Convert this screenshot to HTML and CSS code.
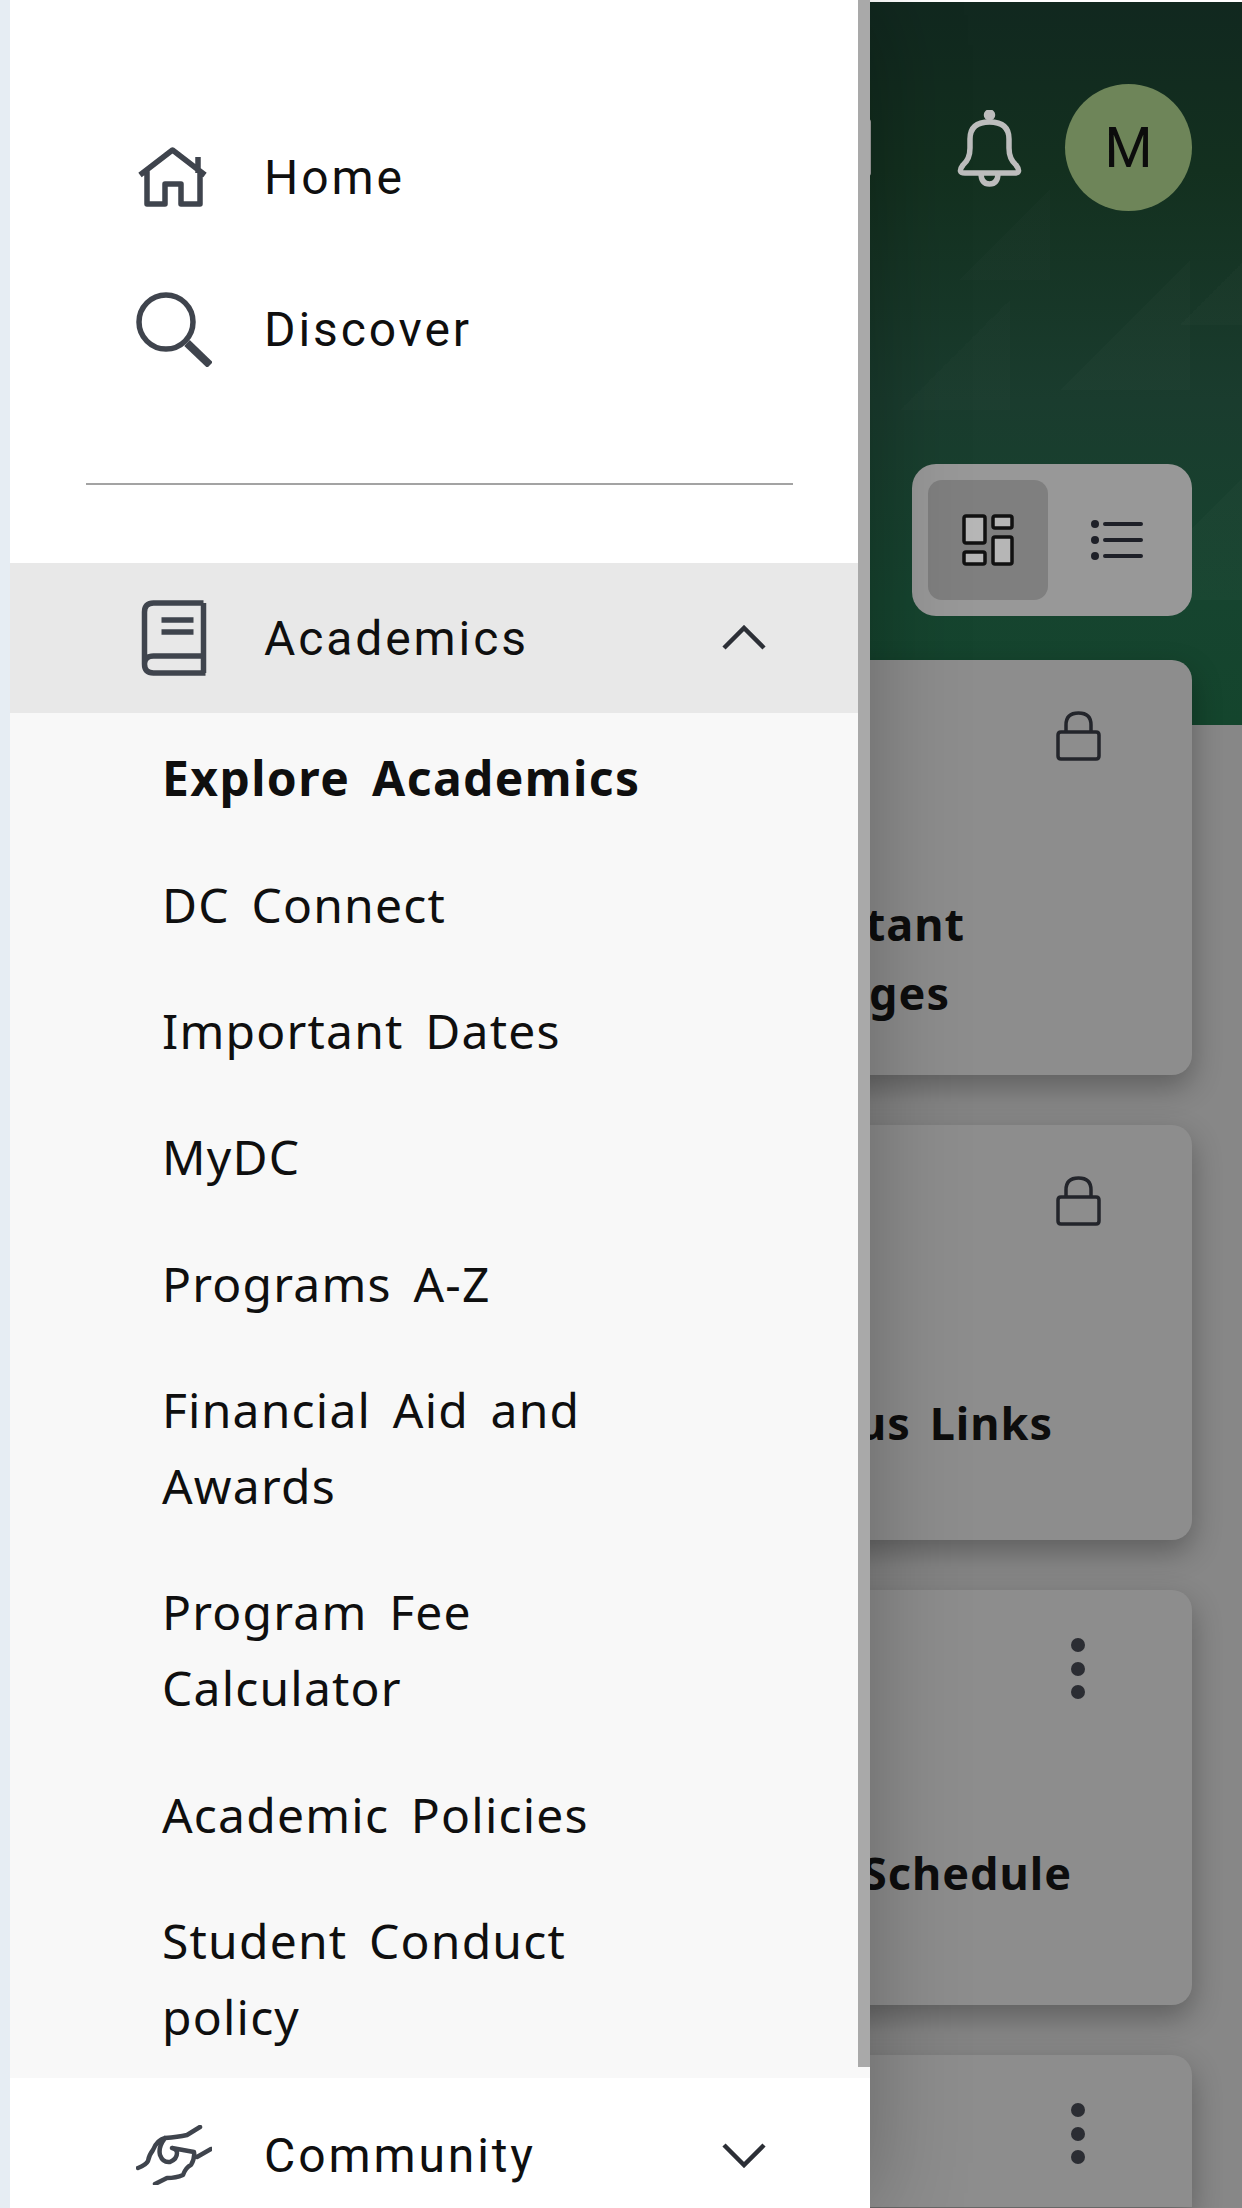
FILE: index.html
```html
<!DOCTYPE html>
<html lang="en">
<head>
<meta charset="utf-8">
<title>Menu</title>
<link rel="stylesheet" href="styles.css">
</head>
<body>
<div class="page">
  <header class="top">
    <span class="peek"></span>
    <svg class="bell" viewBox="0 0 67 79" fill="none"><circle cx="33.500" cy="5" r="3" fill="#bdbdbd"/><path d="M7 55Q14 49 14 38V29Q14 12 33.500 12Q53 12 53 29V38Q53 49 60 55Q66 63 58 63H9Q1 63 7 55ZM25 63Q25 74 33.500 74Q42 74 42 63"/></svg>
    <div class="avatar">M</div>
  </header>
  <div class="toggle-row">
    <div class="toggle">
      <span class="toggle-btn is-on">
        <svg class="i-grid" viewBox="0 0 52 52"><rect x="2" y="2" width="21" height="27" rx="2"/><rect x="31" y="2" width="19" height="12" rx="2"/><rect x="2" y="38" width="21" height="12" rx="2"/><rect x="31" y="23" width="19" height="27" rx="2"/></svg>
      </span>
      <span class="toggle-btn">
        <svg class="i-list" viewBox="0 0 52 42"><circle cx="4" cy="5" r="4"/><circle cx="4" cy="21" r="4"/><circle cx="4" cy="37" r="4"/><path d="M14 5H50M14 21H50M14 37H50"/></svg>
      </span>
    </div>
  </div>
  <main class="cards">
    <article class="card">
      <div class="card-head"><svg class="i-lock" viewBox="0 0 45 50"><path d="M10 21V14Q10 2 22.500 2Q35 2 35 14V21M5 21H40Q43 21 43 24V45Q43 48 40 48H5Q2 48 2 45V24Q2 21 5 21Z"/></svg></div>
      <div class="card-title t-one"><span>Important<br>Messages</span></div>
    </article>
    <article class="card">
      <div class="card-head"><svg class="i-lock" viewBox="0 0 45 50"><path d="M10 21V14Q10 2 22.500 2Q35 2 35 14V21M5 21H40Q43 21 43 24V45Q43 48 40 48H5Q2 48 2 45V24Q2 21 5 21Z"/></svg></div>
      <div class="card-title t-two"><span>Campus Links</span></div>
    </article>
    <article class="card">
      <div class="card-head"><span class="kebab"><i></i><i></i><i></i></span></div>
      <div class="card-title t-three"><span>Class Schedule</span></div>
    </article>
    <article class="card card-cut">
      <div class="card-head"><span class="kebab"><i></i><i></i><i></i></span></div>
    </article>
  </main>
</div>

<nav class="drawer">
  <div class="drawer-body">
    <div class="drawer-scroll">
      <div class="quick">
        <a class="row"><span class="ico"><svg class="i-home" viewBox="0 0 70 60"><path d="M2 28L34.500 3L67 28M9 23V57H27V37H43V57H62V23M60 10V26"/></svg></span><span class="label">Home</span></a>
        <a class="row"><span class="ico"><svg class="i-search" viewBox="0 0 76 76"><circle cx="30" cy="31" r="27"/><path class="thick" d="M51 52L74 74"/></svg></span><span class="label">Discover</span></a>
      </div>
      <hr class="rule">
      <a class="row row-open"><span class="ico"><svg class="i-book" viewBox="0 0 66 76"><path d="M62 3H12Q3 3 3 12V64Q3 73 12 73H64M62 3V56H12Q3 56 3 64M62 56V73M20 20H52M20 32H52"/></svg></span><span class="label">Academics</span><svg class="chev" viewBox="0 0 46 26"><path d="M3 23L23 3L43 23"/></svg></a>
      <ul class="sub">
        <li class="sub-strong">Explore Academics</li>
        <li>DC Connect</li>
        <li>Important Dates</li>
        <li>MyDC</li>
        <li>Programs A-Z</li>
        <li>Financial Aid and<br>Awards</li>
        <li>Program Fee<br>Calculator</li>
        <li>Academic Policies</li>
        <li>Student Conduct<br>policy</li>
      </ul>
    </div>
    <div class="track"><span class="thumb"></span></div>
  </div>
  <a class="row row-foot"><span class="ico"><svg class="i-hands" viewBox="0 0 76 60"><path d="M2 43Q10 40 12 36Q13 30 17 25Q21 15 29 13Q42 12 51 10L64 2M29 13Q22 22 24 30Q27 38 34 37Q41 34 41 28Q41 24 36 23L58 27Q59 33 55 40Q50 42 47 50Q40 53 31 53L19 59M61 32L75 24"/></svg></span><span class="label">Community</span><svg class="chev" viewBox="0 0 46 26"><path d="M3 3L23 23L43 3"/></svg></a>
</nav>
</body>
</html>
```
FILE: styles.css
```css
* { box-sizing: border-box; }
html, body { margin: 0; padding: 0; }
body {
  position: relative;
  width: 1242px;
  height: 2208px;
  overflow: hidden;
  font-family: "Noto Sans", sans-serif;
  background: #878787;
}
.page {
  height: 2208px;
  padding-top: 2px;
  background:
    linear-gradient(135deg, transparent 50%, rgba(255,255,255,.014) 50%) 1060px 260px / 130px 130px no-repeat,
    linear-gradient(135deg, transparent 50%, rgba(255,255,255,.014) 50%) 1180px 255px / 70px 70px no-repeat,
    linear-gradient(135deg, transparent 50%, rgba(255,255,255,.016) 50%) 1120px 470px / 130px 130px no-repeat,
    linear-gradient(135deg, transparent 50%, rgba(255,255,255,.012) 50%) 900px 300px / 110px 110px no-repeat,
    linear-gradient(135deg, transparent 50%, rgba(255,255,255,.012) 50%) 960px 190px / 90px 90px no-repeat,
    linear-gradient(180deg, #fff 0, #fff 2px, #11281f 2px, #13301f 170px, #1a3c2e 400px, #16442f 600px, #14452d 725px, #878787 725px);
}
.top {
  display: flex;
  align-items: center;
  justify-content: flex-end;
  height: 127px;
  margin-top: 82px;
  padding-right: 50px;
}
.peek {
  width: 3px;
  height: 57px;
  margin-right: 85px;
  background: #a4a4a4;
  border-radius: 0 4px 4px 0;
}
.bell {
  width: 67px;
  height: 79px;
  margin: 3px 42px 0 0;
  fill: none;
  stroke: #bdbdbd;
  stroke-width: 5.500;
  stroke-linejoin: round;
  stroke-linecap: round;
}
.avatar {
  width: 127px;
  height: 127px;
  display: flex;
  align-items: center;
  justify-content: center;
  border-radius: 50%;
  background: #6e8559;
  color: #0c0c0c;
  font-family: Roboto, sans-serif;
  font-size: 55px;
}
.toggle-row {
  display: flex;
  justify-content: flex-end;
  margin-top: 253px;
  padding-right: 50px;
}
.toggle {
  display: flex;
  align-items: center;
  width: 280px;
  height: 152px;
  padding: 16px;
  border-radius: 24px;
  background: #989898;
}
.toggle-btn {
  flex: 0 0 120px;
  height: 120px;
  display: flex;
  align-items: center;
  justify-content: center;
  border-radius: 14px;
}
.toggle-btn + .toggle-btn { margin-left: 9px; }
.is-on { background: #7f7f7f; }
.i-grid { width: 52px; height: 52px; }
.i-grid rect { fill: #b6b6b6; stroke: #111; stroke-width: 3.500; }
.i-list { width: 52px; height: 42px; }
.i-list circle { fill: #1e2028; }
.i-list path { stroke: #1e2028; stroke-width: 4; stroke-linecap: round; fill: none; }
.cards {
  display: flex;
  flex-direction: column;
  gap: 50px;
  margin: 44px 50px 0 50px;
}
.card {
  flex: none;
  height: 415px;
  border-radius: 20px;
  background: #8d8d8d;
  box-shadow: 0 12px 30px rgba(0,0,0,.3);
}
.card-cut {
  height: 152px;
  border-radius: 20px 20px 0 0;
}
.card-head {
  display: flex;
  justify-content: flex-end;
  height: 90px;
  padding: 51px 91px 0 0;
}
.i-lock { width: 45px; height: 50px; fill: none; stroke: #23252b; stroke-width: 3.500; }
.kebab {
  display: flex;
  flex: none;
  flex-direction: column;
  gap: 9.500px;
  height: 61px;
  margin: -3px 16px 0 0;
}
.kebab i { display: block; flex: none; width: 14px; height: 14px; border-radius: 50%; background: #2b2d33; }
.card-title {
  display: flex;
  justify-content: flex-end;
  color: #0d0d0d;
  font-size: 45px;
  font-weight: 700;
  line-height: 69px;
  word-spacing: 6px;
  letter-spacing: 1px;
}
.t-one { margin-top: 139px; padding-right: 227px; }
.t-two { margin-top: 173px; padding-right: 139px; }
.t-three { margin-top: 158px; padding-right: 120px; }

.drawer {
  position: absolute;
  top: 0;
  left: 0;
  bottom: 0;
  display: flex;
  flex-direction: column;
  width: 870px;
  border-left: 10px solid #e6edf3;
  background: #fff;
  color: #0f0f0f;
  box-shadow: 0 0 90px rgba(0,0,0,.28);
}
.drawer-body {
  display: flex;
  flex: 0 0 2078px;
}
.drawer-scroll { flex: 1; padding-top: 101px; }
.track { flex: 0 0 12px; background: #f8f8f8; }
.thumb { display: block; height: 2067px; background: #a9a9a9; }
.row {
  display: flex;
  align-items: center;
  height: 152px;
  padding-left: 128px;
}
.ico {
  flex: 0 0 126px;
  display: flex;
  align-items: center;
}
.ico svg {
  fill: none;
  stroke: #3f444d;
  stroke-width: 5.500;
  stroke-linejoin: round;
  stroke-linecap: butt;
}
.i-home { width: 70px; height: 60px; }
.i-search { width: 76px; height: 76px; margin-left: -2px; }
.thick { stroke-width: 8; }
.i-book { width: 69px; height: 76px; margin-left: 2px; }
.ico .i-hands { width: 76px; height: 60px; margin-left: -2px; stroke-width: 4.500; stroke-linecap: round; }
.label {
  flex: 1;
  font-family: Roboto, sans-serif;
  font-size: 48px;
  letter-spacing: 2.900px;
}
.chev {
  flex: 0 0 46px;
  width: 46px;
  height: 26px;
  margin-right: 91px;
  fill: none;
  stroke: #2c2f36;
  stroke-width: 4.500;
}
.rule {
  height: 2px;
  margin: 78px 65px 78px 76px;
  border: 0;
  background: #a3a3a3;
}
.row-open { height: 150px; background: #e8e8e8; }
.sub {
  list-style: none;
  margin: 0;
  padding: 2px 0 0 152px;
  background: #f8f8f8;
  height: 1365px;
  font-size: 48px;
  line-height: 76px;
  letter-spacing: 1.200px;
  word-spacing: 8px;
}
.sub li { padding: 25.200px 0; }
.sub-strong { font-weight: 700; letter-spacing: 1.400px; }
.row-foot { flex: 1; height: 130px; padding-top: 24px; }
.row-foot .chev { margin-right: 103px; }
```
